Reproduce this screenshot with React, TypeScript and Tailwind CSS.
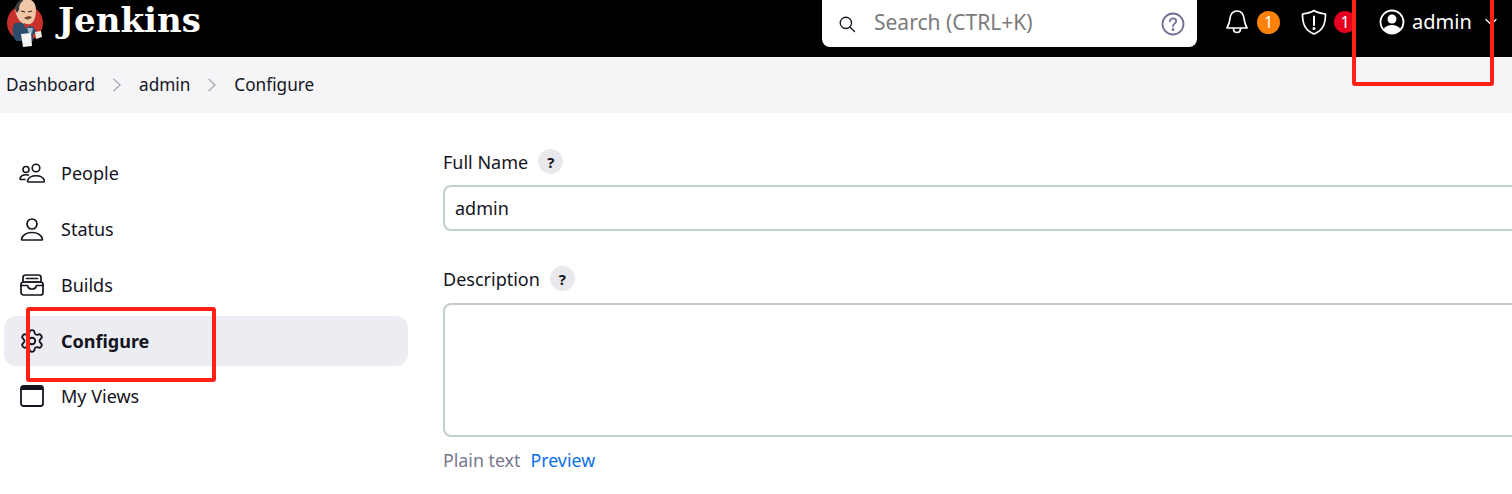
import { Settings } from 'lucide-react';

const font = "font-['Noto_Sans','Open_Sans',sans-serif]";

function JenkinsLogo() {
  return (
    <svg viewBox="0 0 50 50" className="h-[50px] w-[50px] shrink-0">
      <circle cx="25" cy="23" r="18" fill="#c8302a" />
      <path d="M15 9C17 1 22 -1 27 -1c6 0 9 5 9 11 0 5-1 10-4 13-3 2-7 2-10 0-4-3-6-8-7-14Z" fill="#efc6a6" />
      <path d="M15 9C16 2 21 -1 24 -1l-2 3c-2 1-3 4-3 8l-2 3Z" fill="#3a3a3a" />
      <path d="M21 11l4 1M28 12l4-1" stroke="#33261c" strokeWidth="1.200" />
      <path d="M24 18c3-2 6-2 8-1-2 3-6 3-8 1Z" fill="#6b4630" />
      <path d="M14 24c3-2 7-2 10 0l8 1 4 6 1 3-4 0 0 7-17 0c-4-5-4-12-2-17Z" fill="#2e4c6c" />
      <path d="M24 23l5 2 5-3 1 5-5-1-5 2Z" fill="#d3312c" />
      <path d="M27 28l6 0-1 5-3 1Z" fill="#9fb9c9" />
      <path d="M21 34l10-1 1 13-9 1Z" fill="#f5f5f5" />
      <path d="M35 32l6-1 1 6-6 2Z" fill="#efe8da" />
    </svg>
  );
}

function SearchIcon() {
  return (
    <svg viewBox="0 0 24 24" fill="none" stroke="#14141f" strokeWidth="1.800" strokeLinecap="round" className="h-[18px] w-[18px]">
      <circle cx="10.500" cy="10.500" r="7.500" />
      <path d="M16 16l6 6" />
    </svg>
  );
}

function HelpIcon() {
  return (
    <svg viewBox="0 0 24 24" className="h-[24px] w-[24px]" fill="none" stroke="#6f6f93" strokeWidth="1.800" strokeLinecap="round">
      <circle cx="12" cy="12" r="10.500" />
      <path d="M8.900 9.400c.2-1.900 1.500-3 3.200-3 1.800 0 3.100 1.100 3.100 2.700 0 2.500-3.200 2.600-3.200 5.200" />
      <circle cx="12" cy="17.500" r="0.600" fill="#6f6f93" />
    </svg>
  );
}

function BellIcon() {
  return (
    <svg viewBox="0 0 24 26" className="h-[26px] w-[24px]" fill="none" stroke="#fff" strokeWidth="1.700" strokeLinejoin="round" strokeLinecap="round">
      <path d="M12 2c-4.500 0-6.500 3.500-7 7.500-.4 3.500-1 6-3 9.500h20c-2-3.500-2.600-6-3-9.500C18.500 5.500 16.500 2 12 2Z" />
      <path d="M8.500 19.500c0 2.500 1.500 4 3.500 4s3.500-1.500 3.500-4" />
    </svg>
  );
}

function ShieldIcon() {
  return (
    <svg viewBox="0 0 26 26" className="h-[26px] w-[26px]" fill="none" stroke="#fff" strokeWidth="1.700" strokeLinejoin="round" strokeLinecap="round">
      <path d="M13 1.500C9.500 4 6 4.500 1.500 5c0 10 2.500 16.500 11.500 20C22 21.500 24.500 15 24.500 5 20 4.500 16.500 4 13 1.500Z" />
      <path d="M13 7.500v8.500" strokeWidth="2" />
      <circle cx="13" cy="19.500" r="0.700" fill="#fff" />
    </svg>
  );
}

function UserCircleIcon() {
  return (
    <svg viewBox="0 0 26 26" className="h-[26px] w-[26px]" fill="none">
      <circle cx="13" cy="13" r="11.500" stroke="#fff" strokeWidth="1.800" />
      <circle cx="13" cy="10" r="4.500" fill="#fff" />
      <path d="M4.500 20.500C6.500 17 9.500 16 13 16s6.500 1 8.500 4.500C19.500 23.500 16.500 25 13 25s-6.500-1.500-8.500-4.500Z" fill="#fff" />
    </svg>
  );
}

function PeopleIcon() {
  return (
    <svg viewBox="0 0 26 20" className="h-[20px] w-[26px]" fill="none" stroke="#14141f" strokeWidth="1.600" strokeLinejoin="round">
      <circle cx="17" cy="5" r="3.800" />
      <path d="M9.500 19c-.8 0-1.200-.6-1-1.300 1-3.300 4.500-5 8.500-5s7.500 1.700 8.500 5c.2.700-.2 1.300-1 1.300Z" />
      <circle cx="7" cy="6.500" r="3" />
      <path d="M6.500 16.500H2c-.7 0-1.100-.5-.9-1.200C1.900 12.800 4 11.800 7 11.800c1.100 0 2.100.2 3 .5" />
    </svg>
  );
}

function PersonIcon() {
  return (
    <svg viewBox="0 0 24 24" className="h-[24px] w-[24px]" fill="none" stroke="#14141f" strokeWidth="1.700" strokeLinejoin="round">
      <circle cx="12" cy="7" r="5" />
      <path d="M2.500 23c-.7 0-1.100-.5-.9-1.200C3 17.500 7 15.500 12 15.500s9 2 10.400 6.300c.2.700-.2 1.200-.9 1.200Z" />
    </svg>
  );
}

function BuildsIcon() {
  return (
    <svg viewBox="0 0 24 22" className="h-[22px] w-[24px]" fill="none" stroke="#14141f" strokeWidth="1.700" strokeLinejoin="round" strokeLinecap="round">
      <rect x="1" y="8" width="22" height="13" rx="2.500" />
      <path d="M1 11.500h6.500c.5 2.500 2 3.500 4.500 3.500s4-1 4.500-3.500H23" />
      <path d="M3 8V3.500C3 2 4 1 5.500 1h13C20 1 21 2 21 3.500V8" />
      <path d="M6.500 4.500h11M5 8h14" />
    </svg>
  );
}

function WindowIcon() {
  return (
    <svg viewBox="0 0 24 22" className="h-[22px] w-[24px]" fill="none">
      <rect x="1" y="1" width="22" height="20" rx="2.500" stroke="#14141f" strokeWidth="1.800" />
      <path d="M1 3.500C1 2 2 1 3.500 1h17C22 1 23 2 23 3.500V5H1Z" fill="#14141f" />
    </svg>
  );
}

function Chevron() {
  return (
    <svg viewBox="0 0 10 16" className="h-[14px] w-[10px]" fill="none" stroke="#a9a9bd" strokeWidth="1.600" strokeLinecap="round" strokeLinejoin="round">
      <path d="M1.500 1.500L8.500 8l-7 6.500" />
    </svg>
  );
}

function HelpBadge() {
  return (
    <span className="flex h-[25px] w-[25px] items-center justify-center rounded-full bg-[#e9e9ed] text-[15px] font-bold text-[#14141f]">?</span>
  );
}

const navItems = [
  { label: 'People', icon: <PeopleIcon /> },
  { label: 'Status', icon: <PersonIcon /> },
  { label: 'Builds', icon: <BuildsIcon /> },
  { label: 'Configure', icon: <Settings size={26} strokeWidth={1.7} color="#14141f" />, active: true },
  { label: 'My Views', icon: <WindowIcon /> },
];

export default function App() {
  return (
    <div className={`relative h-[494px] w-[1512px] overflow-hidden bg-white text-[18px] leading-[26px] text-[#14141f] ${font}`}>
      <header className="flex h-[57px] items-start bg-black text-white">
        <div className="flex w-[822px] items-start">
          <JenkinsLogo />
          <span className="ml-[8px] font-['DejaVu_Serif',serif] text-[34px] font-bold leading-[40px]">Jenkins</span>
        </div>
        <div className="flex h-[47px] w-[375px] items-center rounded-b-[8px] bg-white pl-[16px] pr-[12px]">
          <SearchIcon />
          <span className="ml-[18px] flex-1 pb-[3px] text-[21px] text-[#7b7b7b]">Search (CTRL+K)</span>
          <HelpIcon />
        </div>
        <div className="ml-[28px] flex h-[44px] items-center text-[20px]">
          <BellIcon />
          <span className="ml-[8px] flex h-[23px] w-[23px] items-center justify-center rounded-full bg-[#fe820a] text-[16px] leading-none">1</span>
          <span className="ml-[21px]"><ShieldIcon /></span>
          <span className="ml-[7px] flex h-[22px] w-[22px] items-center justify-center rounded-full bg-[#e6001f] text-[16px] leading-none">1</span>
          <span className="ml-[23px]"><UserCircleIcon /></span>
          <span className="ml-[7px]">admin</span>
          <svg viewBox="0 0 12 8" className="ml-[13px] h-[8px] w-[12px]" fill="none" stroke="#fff" strokeWidth="1.300" strokeLinecap="round" strokeLinejoin="round">
            <path d="M1 1.500l5 5 5-5" />
          </svg>
        </div>
      </header>

      <nav className="flex h-[56px] items-center gap-[17px] bg-[#f5f5f7] pl-[6px] text-[17.200px]">
        <span>Dashboard</span>
        <Chevron />
        <span>admin</span>
        <Chevron />
        <span>Configure</span>
      </nav>

      <main className="flex">
        <aside className="w-[443px] shrink-0 pl-[4px] pr-[35px] pt-[35px]">
          <ul className="flex flex-col gap-[6px]">
            {navItems.map((item) => (
              <li
                key={item.label}
                className={`flex h-[50px] items-center rounded-[12px] last:h-[48px] ${item.active ? 'bg-[#ecedf2] font-bold' : ''}`}
              >
                <span className="flex w-[57px] shrink-0 justify-center pr-[1px]">{item.icon}</span>
                <span>{item.label}</span>
              </li>
            ))}
          </ul>
        </aside>

        <section className="w-[1100px] shrink-0 pt-[36px]">
          <div className="flex h-[25px] items-center gap-[10px]">
            <span>Full Name</span>
            <HelpBadge />
          </div>
          <input
            readOnly
            value="admin"
            className="mt-[11px] block h-[46px] w-full rounded-[8px] border-2 border-[#c3ced1] bg-white px-[10px] text-[18px] text-[#14141f] outline-none"
          />
          <div className="mt-[35px] flex h-[25px] items-center gap-[10px]">
            <span>Description</span>
            <HelpBadge />
          </div>
          <div className="mt-[12px] h-[134px] rounded-[8px] border-2 border-[#c3ced1] bg-white" />
          <div className="mt-[10px] flex gap-[10px] text-[17.800px]">
            <span className="text-[#77778f]">Plain text</span>
            <span className="text-[#0b6fe8]">Preview</span>
          </div>
        </section>
      </main>

      <div className="absolute left-[1352px] top-[-4px] h-[90px] w-[142px] rounded-[3px] border-4 border-[#ff2116]" />
      <div className="absolute left-[26px] top-[307px] h-[75px] w-[190px] rounded-[3px] border-4 border-[#ff2116]" />
    </div>
  );
}
